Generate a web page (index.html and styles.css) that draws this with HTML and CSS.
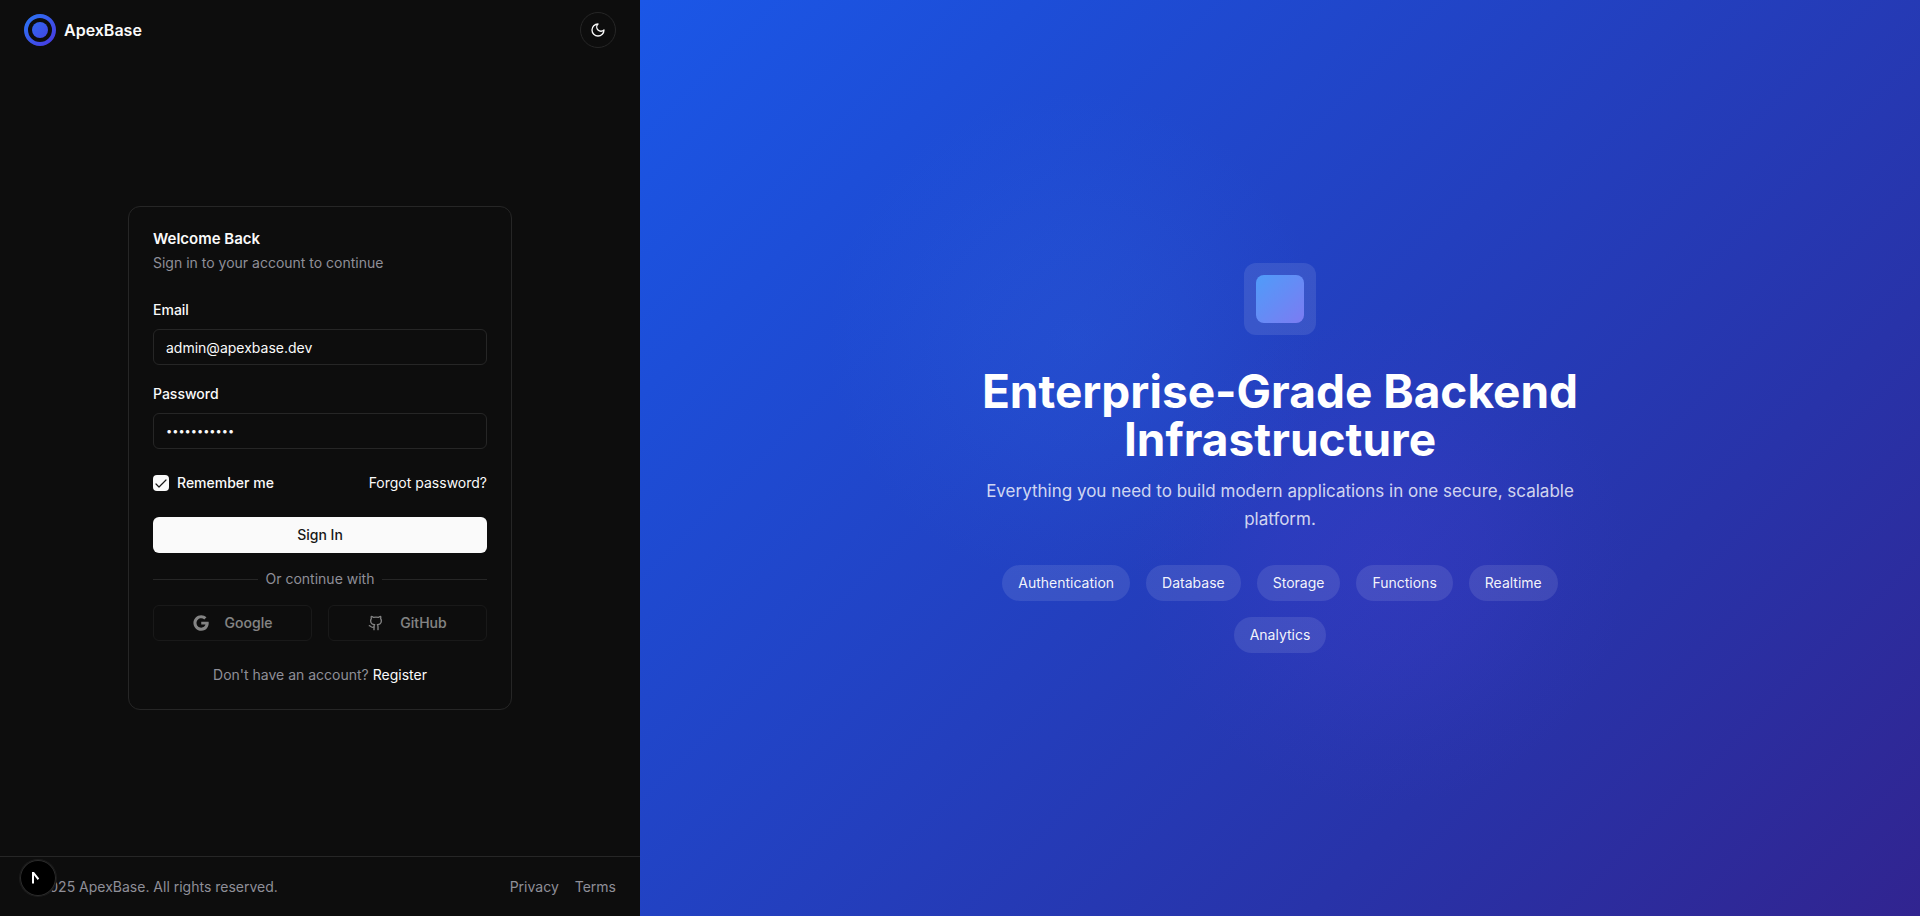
FILE: index.html
```html
<!DOCTYPE html>
<html lang="en">
<head>
<meta charset="utf-8">
<meta name="viewport" content="width=device-width, initial-scale=1">
<title>ApexBase - Sign In</title>
<link rel="stylesheet" href="styles.css">
</head>
<body>
<div class="layout">
  <div class="panel">
    <header class="topbar">
      <a class="brand" href="#">
        <svg class="brand-mark" viewBox="0 0 32 32" aria-hidden="true">
          <defs>
            <linearGradient id="brand" gradientUnits="userSpaceOnUse" x1="0" y1="0" x2="32" y2="32">
              <stop offset="0" stop-color="#2979f5"/>
              <stop offset="1" stop-color="#4a35e0"/>
            </linearGradient>
          </defs>
          <circle cx="16" cy="16" r="14" fill="none" stroke="url(#brand)" stroke-width="4"/>
          <circle cx="16" cy="16" r="8" fill="url(#brand)"/>
        </svg>
        <span class="brand-name">ApexBase</span>
      </a>
      <button class="theme-toggle" type="button" aria-label="Toggle theme">
        <svg class="icon" viewBox="0 0 24 24" aria-hidden="true"><path d="M12 3a6 6 0 0 0 9 9 9 9 0 1 1-9-9Z"/></svg>
      </button>
    </header>

    <main class="main">
      <section class="card">
        <div class="card-head">
          <h1 class="card-title">Welcome Back</h1>
          <p class="card-desc">Sign in to your account to continue</p>
        </div>
        <form class="form">
          <div class="fields">
            <div class="field">
              <label class="label" for="email">Email</label>
              <input class="input" id="email" type="email" value="admin@apexbase.dev">
            </div>
            <div class="field">
              <label class="label" for="password">Password</label>
              <input class="input input-password" id="password" type="password" value="password123">
            </div>
          </div>
          <div class="options">
            <div class="remember">
              <input class="checkbox" id="remember" type="checkbox" checked>
              <label class="label" for="remember">Remember me</label>
            </div>
            <a class="link" href="#">Forgot password?</a>
          </div>
          <div class="actions">
            <button class="submit" type="submit">Sign In</button>
            <div class="divider">Or continue with</div>
            <div class="providers">
              <button class="provider" type="button" disabled>
                <svg class="icon-fill" viewBox="2 2 20.5 20" aria-hidden="true"><path d="M12.545 10.239v3.821h5.445c-.712 2.315-2.647 3.972-5.445 3.972-3.332 0-6.033-2.701-6.033-6.032s2.701-6.032 6.033-6.032c1.498 0 2.866.549 3.921 1.453l2.814-2.814C17.503 2.988 15.139 2 12.545 2 7.021 2 2.543 6.477 2.543 12s4.478 10 10.002 10c8.396 0 10.249-7.85 9.426-11.748z"/></svg>
                Google
              </button>
              <button class="provider" type="button" disabled>
                <svg class="icon" viewBox="0 0 24 24" aria-hidden="true"><path d="M15 22v-4a4.8 4.8 0 0 0-1-3.5c3 0 6-2 6-5.5.08-1.25-.27-2.48-1-3.5.28-1.15.28-2.35 0-3.5 0 0-1 0-3 1.5-2.64-.5-5.36-.5-8 0C6 2 5 2 5 2c-.3 1.15-.3 2.35 0 3.5A5.403 5.403 0 0 0 4 9c0 3.5 3 5.5 6 5.5-.39.49-.68 1.05-.85 1.65-.17.6-.22 1.23-.15 1.85v4"/><path d="M9 18c-4.51 2-5-2-7-2"/></svg>
                GitHub
              </button>
            </div>
          </div>
          <p class="signup">Don't have an account? <a class="link" href="#">Register</a></p>
        </form>
      </section>
    </main>

    <footer class="footer">
      <p class="copyright">© 2025 ApexBase. All rights reserved.</p>
      <nav class="footer-nav">
        <a class="footer-link" href="#">Privacy</a>
        <a class="footer-link" href="#">Terms</a>
      </nav>
    </footer>
  </div>

  <aside class="hero">
    <div class="hero-body">
      <div class="hero-icon"><div class="hero-icon-core"></div></div>
      <h2 class="hero-title">Enterprise-Grade Backend Infrastructure</h2>
      <p class="hero-text">Everything you need to build modern applications in one secure, scalable platform.</p>
      <ul class="tags">
        <li class="tag">Authentication</li>
        <li class="tag">Database</li>
        <li class="tag">Storage</li>
        <li class="tag">Functions</li>
        <li class="tag">Realtime</li>
        <li class="tag">Analytics</li>
      </ul>
    </div>
  </aside>
</div>

<button class="dev-badge" type="button" aria-label="Open dev tools">
  <svg class="dev-badge-mark" viewBox="0 0 36 36" aria-hidden="true">
    <path d="M12 12h2l5.200 6.600-1.500 1.300L14 15.200V23.500H12Z" fill="#fff"/>
  </svg>
</button>
</body>
</html>
```
FILE: styles.css
```css
* {
  box-sizing: border-box;
  margin: 0;
  padding: 0;
}

body {
  background: #0d0d0d;
  color: #fafafa;
  font-family: Inter, "Liberation Sans", sans-serif;
  font-size: 14px;
  line-height: 20px;
  -webkit-font-smoothing: antialiased;
}

button,
input {
  font: inherit;
  color: inherit;
}

a {
  color: inherit;
  text-decoration: none;
}

.layout {
  display: grid;
  grid-template-columns: 1fr 2fr;
  min-height: 100vh;
}

.panel {
  display: flex;
  flex-direction: column;
}

.topbar {
  display: flex;
  align-items: center;
  justify-content: space-between;
  padding: 12px 24px;
}

.brand {
  display: flex;
  align-items: center;
  gap: 8px;
}

.brand-mark {
  width: 32px;
  height: 32px;
}

.brand-name {
  font-size: 16px;
  font-weight: 600;
  line-height: 24px;
}

.theme-toggle {
  display: grid;
  place-items: center;
  width: 36px;
  height: 36px;
  border: 1px solid #262626;
  border-radius: 50%;
  background: transparent;
}

.icon,
.icon-fill {
  width: 16px;
  height: 16px;
}

.icon {
  fill: none;
  stroke: currentColor;
  stroke-width: 2;
  stroke-linecap: round;
  stroke-linejoin: round;
}

.icon-fill {
  fill: currentColor;
}

.main {
  flex: 1;
  display: grid;
  place-items: center;
  padding: 24px;
}

.card {
  display: flex;
  flex-direction: column;
  gap: 28px;
  width: 100%;
  max-width: 384px;
  padding: 24px;
  border: 1px solid #262626;
  border-radius: 12px;
}

.card-head {
  display: flex;
  flex-direction: column;
  gap: 6px;
}

.card-title {
  font-size: 15px;
  font-weight: 600;
  line-height: 16px;
}

.card-desc {
  color: #8f8f98;
}

.form {
  display: flex;
  flex-direction: column;
  gap: 24px;
}

.fields {
  display: flex;
  flex-direction: column;
  gap: 20px;
}

.field {
  display: flex;
  flex-direction: column;
  gap: 10px;
}

.label {
  font-weight: 500;
  line-height: 18px;
}

.input {
  width: 100%;
  height: 36px;
  padding: 4px 12px;
  border: 1px solid #262626;
  border-radius: 6px;
  background: transparent;
  outline: none;
}

.input-password {
  font-size: 11px;
}

.options {
  display: flex;
  align-items: center;
  justify-content: space-between;
}

.remember {
  display: flex;
  align-items: center;
  gap: 8px;
}

.checkbox {
  appearance: none;
  width: 16px;
  height: 16px;
  border-radius: 4px;
  background: #fafafa;
}

.checkbox:checked {
  background: #fafafa url("data:image/svg+xml,%3Csvg xmlns='http://www.w3.org/2000/svg' viewBox='0 0 16 16'%3E%3Cpath d='M3 9l3 3 7-7' fill='none' stroke='%23171717' stroke-width='1.2' stroke-linecap='round' stroke-linejoin='round'/%3E%3C/svg%3E") center / 16px no-repeat;
}

.actions {
  display: flex;
  flex-direction: column;
  gap: 16px;
}

.submit {
  height: 36px;
  border: 0;
  border-radius: 6px;
  background: #fafafa;
  color: #171717;
  font-weight: 500;
}

.divider {
  display: flex;
  align-items: center;
  gap: 8px;
  color: #8f8f98;
}

.divider::before,
.divider::after {
  content: "";
  flex: 1;
  height: 1px;
  background: #262626;
}

.providers {
  display: grid;
  grid-template-columns: 1fr 1fr;
  gap: 16px;
}

.provider {
  display: flex;
  align-items: center;
  justify-content: center;
  gap: 16px;
  height: 36px;
  border: 1px solid #262626;
  border-radius: 6px;
  background: transparent;
  font-weight: 500;
  opacity: 0.5;
}

.signup {
  color: #8f8f98;
  text-align: center;
}

.signup .link {
  color: #fafafa;
}

.footer {
  display: flex;
  align-items: center;
  justify-content: space-between;
  min-height: 60px;
  padding: 0 24px;
  border-top: 1px solid #262626;
  color: #8f8f98;
}

.footer-nav {
  display: flex;
  gap: 16px;
}

.hero {
  display: grid;
  place-items: center;
  padding: 32px;
  background:
    radial-gradient(circle at 34% 37%, rgba(59, 130, 246, 0.13), rgba(59, 130, 246, 0.09) 100px, rgba(59, 130, 246, 0.03) 190px, transparent 250px),
    radial-gradient(circle at 58% 61%, rgba(88, 60, 220, 0.2), rgba(88, 60, 220, 0.14) 100px, rgba(88, 60, 220, 0.04) 190px, transparent 250px),
    linear-gradient(135deg, #1b57e7 0%, #1d4ed8 18%, #2833a9 72%, #312490 100%);
}

.hero-body {
  display: flex;
  flex-direction: column;
  align-items: center;
  max-width: 620px;
  text-align: center;
}

.hero-icon {
  display: grid;
  place-items: center;
  width: 72px;
  height: 72px;
  margin-bottom: 32px;
  border-radius: 12px;
  background: rgba(255, 255, 255, 0.1);
}

.hero-icon-core {
  width: 48px;
  height: 48px;
  border-radius: 8px;
  background: linear-gradient(135deg, #4f9cf9, #7c7bf2);
}

.hero-title {
  margin-bottom: 14px;
  color: #fff;
  font-size: 46px;
  font-weight: 700;
  line-height: 48px;
}

.hero-text {
  margin-bottom: 32px;
  color: rgba(255, 255, 255, 0.8);
  font-size: 17px;
  line-height: 28px;
}

.tags {
  display: flex;
  flex-wrap: wrap;
  justify-content: center;
  gap: 16px;
  list-style: none;
}

.tag {
  padding: 8px 16px;
  border-radius: 18px;
  background: rgba(255, 255, 255, 0.1);
  color: rgba(255, 255, 255, 0.95);
}

.dev-badge {
  position: fixed;
  bottom: 20px;
  left: 20px;
  width: 36px;
  height: 36px;
  border: 0;
  border-radius: 50%;
  background: #000;
  box-shadow: inset 0 0 0 1px #2b2b2b, 0 0 0 1px #1c1c1c;
}

.dev-badge-mark {
  display: block;
  width: 100%;
  height: 100%;
}
```
